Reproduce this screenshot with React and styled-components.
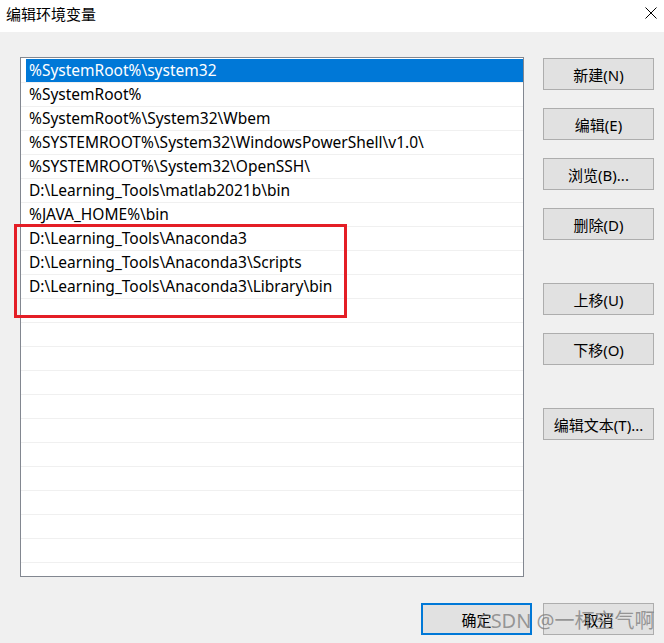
import React from 'react';
import styled, { createGlobalStyle } from 'styled-components';

const GlobalStyle = createGlobalStyle`
  html, body {
    margin: 0;
    padding: 0;
    background: #f0f0f0;
  }
  body {
    font-family: "Noto Sans", "Noto Sans CJK SC", sans-serif;
    color: #000;
  }
`;

const Window = styled.div`
  position: relative;
  width: 664px;
  height: 643px;
  display: flex;
  flex-direction: column;
  background: #f0f0f0;
  overflow: hidden;
`;

const TitleBar = styled.div`
  height: 32px;
  flex: none;
  background: #fff;
  display: flex;
  align-items: flex-start;
  justify-content: space-between;
  padding: 0 7px 0 6px;
  box-sizing: border-box;
`;

const Title = styled.div`
  font-family: "Noto Sans CJK SC", sans-serif;
  font-size: 15px;
  line-height: 27px;
`;

const CloseButton = styled.div`
  width: 12px;
  height: 12px;
  margin-top: 7px;
  display: flex;
`;

const Body = styled.div`
  flex: 1;
  display: flex;
  flex-direction: column;
  padding: 25px 10px 0 20px;
`;

const Main = styled.div`
  display: flex;
  gap: 19px;
`;

const List = styled.div`
  width: 504px;
  height: 520px;
  box-sizing: border-box;
  border: 1px solid #828790;
  background: #fff;
  padding-top: 1px;
  overflow: hidden;
`;

const Row = styled.div`
  height: 24px;
  box-sizing: border-box;
  border-bottom: 1px solid #f0f0f0;
  display: flex;
`;

const Cell = styled.div`
  flex: 1;
  margin-left: 5px;
  padding-left: 3px;
  font-family: "Noto Sans", "Noto Sans CJK SC", sans-serif;
  font-size: 15.5px;
  line-height: 23px;
  white-space: nowrap;
  background: ${(p) => (p.$selected ? '#0078d7' : 'transparent')};
  color: ${(p) => (p.$selected ? '#fff' : '#000')};
`;

const ButtonColumn = styled.div`
  display: flex;
  flex-direction: column;
  gap: 18px;
  padding-top: 1px;
`;

const Button = styled.div`
  width: 111px;
  height: 32px;
  box-sizing: border-box;
  display: flex;
  align-items: center;
  justify-content: center;
  background: #e1e1e1;
  border: ${(p) => (p.$default ? '2px solid #0078d7' : '1px solid #adadad')};
  font-family: "Noto Sans", "Noto Sans CJK SC", sans-serif;
  font-size: 15px;
  margin-top: ${(p) => (p.$spaced ? '25px' : '0')};
`;

const Footer = styled.div`
  display: flex;
  justify-content: flex-end;
  gap: 11px;
  margin-top: 26px;
`;

const Highlight = styled.div`
  position: absolute;
  left: 14px;
  top: 224px;
  width: 333px;
  height: 94px;
  box-sizing: border-box;
  border: 3px solid #e41e26;
  pointer-events: none;
`;

const Watermark = styled.div`
  position: absolute;
  left: 478px;
  top: 607px;
  font-family: "Noto Sans", "Noto Sans CJK SC", sans-serif;
  font-size: 20px;
  line-height: 28px;
  color: rgba(115, 115, 115, 0.7);
  white-space: nowrap;
  pointer-events: none;
`;

const paths = [
  '%SystemRoot%\\system32',
  '%SystemRoot%',
  '%SystemRoot%\\System32\\Wbem',
  '%SYSTEMROOT%\\System32\\WindowsPowerShell\\v1.0\\',
  '%SYSTEMROOT%\\System32\\OpenSSH\\',
  'D:\\Learning_Tools\\matlab2021b\\bin',
  '%JAVA_HOME%\\bin',
  'D:\\Learning_Tools\\Anaconda3',
  'D:\\Learning_Tools\\Anaconda3\\Scripts',
  'D:\\Learning_Tools\\Anaconda3\\Library\\bin',
];

const rows = [...paths, ...Array(12).fill('')];

export default function App() {
  return (
    <>
      <GlobalStyle />
      <Window>
        <TitleBar>
          <Title>编辑环境变量</Title>
          <CloseButton>
            <svg width="12" height="12" viewBox="0 0 12 12">
              <path d="M0.5 0.5 L11.5 11.5 M11.5 0.5 L0.5 11.5" stroke="#000" strokeWidth="1" fill="none" />
            </svg>
          </CloseButton>
        </TitleBar>
        <Body>
          <Main>
            <List>
              {rows.map((text, i) => (
                <Row key={i}>
                  <Cell $selected={i === 0}>{text}</Cell>
                </Row>
              ))}
            </List>
            <ButtonColumn>
              <Button>新建(N)</Button>
              <Button>编辑(E)</Button>
              <Button>浏览(B)...</Button>
              <Button>删除(D)</Button>
              <Button $spaced>上移(U)</Button>
              <Button>下移(O)</Button>
              <Button $spaced>编辑文本(T)...</Button>
            </ButtonColumn>
          </Main>
          <Footer>
            <Button $default>确定</Button>
            <Button>取消</Button>
          </Footer>
        </Body>
        <Highlight />
        <Watermark>CSDN @一杯空气啊</Watermark>
      </Window>
    </>
  );
}
